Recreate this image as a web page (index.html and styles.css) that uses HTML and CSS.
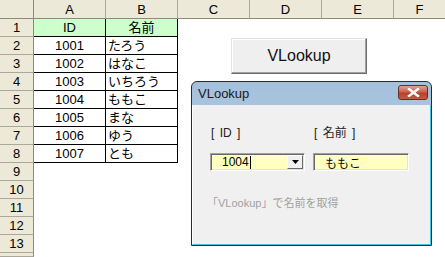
FILE: index.html
```html
<!DOCTYPE html>
<html>
    <head>
        <meta content="text/html;charset=utf-8" http-equiv="Content-Type" />
        <title>VLookup</title>
        <link rel="stylesheet" href="styles.css">
    </head>
    <body>
        <div class="sheet">
            <div class="hd corner"></div><div class="hd col">A</div><div class="hd col">B</div><div class="hd col">C</div><div class="hd col">D</div><div class="hd col">E</div><div class="hd col last">F</div>

            <div class="hd row">1</div><div class="cell tbl th">ID</div><div class="cell tbl th">名前</div><div class="cell"></div><div class="cell"></div><div class="cell"></div><div class="cell"></div>
            <div class="hd row">2</div><div class="cell tbl num">1001</div><div class="cell tbl name">たろう</div><div class="cell"></div><div class="cell"></div><div class="cell"></div><div class="cell"></div>
            <div class="hd row">3</div><div class="cell tbl num">1002</div><div class="cell tbl name">はなこ</div><div class="cell"></div><div class="cell"></div><div class="cell"></div><div class="cell"></div>
            <div class="hd row">4</div><div class="cell tbl num">1003</div><div class="cell tbl name">いちろう</div><div class="cell"></div><div class="cell"></div><div class="cell"></div><div class="cell"></div>
            <div class="hd row">5</div><div class="cell tbl num">1004</div><div class="cell tbl name">ももこ</div><div class="cell"></div><div class="cell"></div><div class="cell"></div><div class="cell"></div>
            <div class="hd row">6</div><div class="cell tbl num">1005</div><div class="cell tbl name">まな</div><div class="cell"></div><div class="cell"></div><div class="cell"></div><div class="cell"></div>
            <div class="hd row">7</div><div class="cell tbl num">1006</div><div class="cell tbl name">ゆう</div><div class="cell"></div><div class="cell"></div><div class="cell"></div><div class="cell"></div>
            <div class="hd row">8</div><div class="cell tbl num">1007</div><div class="cell tbl name">とも</div><div class="cell"></div><div class="cell"></div><div class="cell"></div><div class="cell"></div>
            <div class="hd row">9</div><div class="cell"></div><div class="cell"></div><div class="cell"></div><div class="cell"></div><div class="cell"></div><div class="cell"></div>
            <div class="hd row">10</div><div class="cell"></div><div class="cell"></div><div class="cell"></div><div class="cell"></div><div class="cell"></div><div class="cell"></div>
            <div class="hd row">11</div><div class="cell"></div><div class="cell"></div><div class="cell"></div><div class="cell"></div><div class="cell"></div><div class="cell"></div>
            <div class="hd row">12</div><div class="cell"></div><div class="cell"></div><div class="cell"></div><div class="cell"></div><div class="cell"></div><div class="cell"></div>
            <div class="hd row">13</div><div class="cell"></div><div class="cell"></div><div class="cell"></div><div class="cell"></div><div class="cell"></div><div class="cell"></div>
            <div class="hd row"></div>
        </div>

        <button class="sheet-button">VLookup</button>

        <div class="dialog">
            <div class="title-bar">
                <span class="title">VLookup</span>
                <span class="close-btn">
                    <svg width="13" height="9" viewBox="0 0 13 9">
                        <path d="M2 1 L11 8 M11 1 L2 8" stroke="#fff" stroke-width="2.4" stroke-linecap="square" />
                    </svg>
                </span>
            </div>
            <div class="client">
                <div class="fields">
                    <div class="field id-field">
                        <span class="label">[ ID ]</span>
                        <div class="combo">
                            <span class="combo-text">1004<span class="caret"></span></span>
                            <span class="drop-btn">
                                <svg width="7" height="4" viewBox="0 0 7 4"><path d="M0 0 H7 L3.5 4 Z" fill="#000" /></svg>
                            </span>
                        </div>
                    </div>
                    <div class="field name-field">
                        <span class="label">[ 名前 ]</span>
                        <div class="textbox">ももこ</div>
                    </div>
                </div>
                <p class="hint">「VLookup」で名前を取得</p>
            </div>
        </div>
    </body>
</html>
```

FILE: styles.css
```css
* {
    box-sizing: border-box;
}

body {
    margin: 0;
    width: 445px;
    height: 257px;
    overflow: hidden;
    position: relative;
    background-color: #ffffff;
    font-family: "Liberation Sans", "Noto Sans CJK JP", sans-serif;
    font-size: 13px;
    color: #000000;
}

.sheet {
    display: grid;
    grid-template-columns: 34px repeat(5, 72px) 1fr;
    grid-template-rows: 19px repeat(13, 18px) 1fr;
    height: 257px;
}

.hd {
    background-color: #ece9d8;
    border-right: 1px solid #aca899;
    border-bottom: 1px solid #aca899;
    display: flex;
    align-items: center;
    justify-content: center;
    line-height: 1;
}

.hd.col {
    border-bottom-color: #8d8a7c;
}

.hd.corner {
    border-bottom-color: #8d8a7c;
    border-right-color: #8d8a7c;
}

.hd.row {
    border-right-color: #8d8a7c;
}

.hd.last {
    border-right: none;
}

.cell {
    display: flex;
    align-items: center;
    line-height: 1;
    white-space: nowrap;
}

.tbl {
    border-right: 1px solid #000;
    border-bottom: 1px solid #000;
}

.th {
    background-color: #ccffcc;
    justify-content: center;
}

.num {
    justify-content: center;
}

.name {
    padding-left: 2px;
}

.sheet-button {
    position: absolute;
    left: 231px;
    top: 38px;
    width: 136px;
    height: 36px;
    background-color: #efefef;
    border: 1px solid;
    border-color: #e3e3e3 #6e6e6e #6e6e6e #e3e3e3;
    box-shadow: inset -1px -1px 0 #a0a0a0, inset 1px 1px 0 #ffffff;
    font-family: "Liberation Sans", sans-serif;
    font-size: 16px;
    color: #111;
    padding: 0;
}

.dialog {
    position: absolute;
    left: 191px;
    top: 81px;
    width: 241px;
    height: 165px;
    border: 1px solid #2a2a2a;
    border-radius: 6px 6px 0 0;
    background: linear-gradient(#a5c0dc, #c3d8ee);
    display: flex;
    flex-direction: column;
}

.title-bar {
    height: 23px;
    display: flex;
    align-items: center;
    justify-content: space-between;
    padding: 0 3px 0 6px;
}

.title {
    font-size: 13px;
    color: #1a1a1a;
}

.close-btn {
    width: 30px;
    height: 15px;
    margin-top: -2px;
    border: 1px solid #6b2a24;
    border-radius: 3px;
    background: linear-gradient(#e0a394, #c9624f 45%, #b8402c 55%, #c75a44);
    display: flex;
    align-items: center;
    justify-content: center;
}

.client {
    flex: 1;
    background-color: #f0f0f0;
    border-left: 1px solid #ffffff;
    border-right: 1px solid #3fc3e6;
    border-bottom: 1px solid #3fc3e6;
    padding: 21px 0 0 17px;
    font-family: "Liberation Sans", "Noto Sans CJK JP", sans-serif;
    font-size: 12px;
}

.fields {
    display: flex;
    gap: 8px;
}

.field {
    display: flex;
    flex-direction: column;
    gap: 13px;
}

.label {
    color: #222;
    line-height: 14px;
    padding-left: 1px;
    word-spacing: 2px;
}

.combo,
.textbox {
    height: 18px;
    background-color: #ffffc0;
    border: 1px solid;
    border-color: #a0a0a0 #ffffff #ffffff #a0a0a0;
    box-shadow: inset 1px 1px 0 #696969, inset -1px -1px 0 #e3e3e3;
}

.combo {
    width: 95px;
    display: flex;
    align-items: stretch;
}

.combo-text {
    flex: 1;
    padding-left: 11px;
    display: flex;
    align-items: center;
    font-size: 12px;
}

.caret {
    display: inline-block;
    width: 1px;
    height: 13px;
    background-color: #000;
    margin-left: 1px;
}

.drop-btn {
    width: 16px;
    margin: 1px 1px 1px 0;
    background-color: #f0f0f0;
    border: 1px solid;
    border-color: #ffffff #696969 #696969 #ffffff;
    display: flex;
    align-items: center;
    justify-content: center;
}

.textbox {
    width: 96px;
    padding-left: 11px;
    display: flex;
    align-items: center;
    font-family: "Noto Sans CJK JP", sans-serif;
    font-size: 12px;
}

.hint {
    margin: 25px 0 0 -3px;
    color: #a0a0a0;
    font-size: 11px;
    line-height: 14px;
}
```
